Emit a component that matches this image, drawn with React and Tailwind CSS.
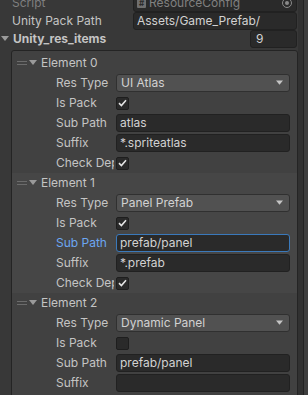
import React from 'react';

const Caret = ({ className = '' }) => (
    <svg width="8" height="6" viewBox="0 0 8 6" className={className}>
        <path d="M0 0 H8 L4 5 Z" fill="currentColor" />
    </svg>
);

const Check = () => (
    <svg width="9" height="8" viewBox="0 0 9 8">
        <path d="M1 4.2 L3.4 6.5 L8 1.2" stroke="#e4e4e4" strokeWidth="1.6" fill="none" />
    </svg>
);

const TextField = ({ value, focused }) => (
    <div
        className={`flex-1 h-[18px] rounded-[3px] bg-[#2a2a2a] border flex items-center pl-[3px] text-[#d2d2d2] whitespace-nowrap ${
            focused ? 'border-[#3a79bb]' : 'border-[#212121]'
        }`}
    >
        {value}
    </div>
);

const Popup = ({ value }) => (
    <div className="flex-1 h-[18px] rounded-[3px] bg-[#515151] border border-[#303030] flex items-center justify-between pl-[4px] pr-[6px] text-[#d2d2d2]">
        <span>{value}</span>
        <Caret className="text-[#c4c4c4] w-[7px]" />
    </div>
);

const Toggle = ({ on }) => (
    <div className="w-[13px] h-[13px] rounded-[2px] bg-[#2a2a2a] border border-[#1e1e1e] flex items-center justify-center">
        {on && <Check />}
    </div>
);

const Field = ({ label, focused, children }) => (
    <div className="h-[20px] flex items-center pl-[44px] pr-[7px]">
        <div className={`w-[60px] shrink-0 ${focused ? 'text-[#6ca6f2]' : 'text-[#c4c4c4]'}`}>
            <div className="max-w-[58px] overflow-hidden whitespace-nowrap">{label}</div>
        </div>
        {children}
    </div>
);

const Element = ({ index, resType, isPack, subPath, suffix, checkDep, selected, focusSub }) => (
    <div className={selected ? 'bg-[#464646]' : ''}>
        <div className="h-[20px] flex items-center pl-[5px] text-[#c4c4c4]">
            <div className="w-[10px] flex flex-col gap-[2px] mr-[2px]">
                <div className="h-px bg-[#6b6b6b]" />
                <div className="h-px bg-[#6b6b6b]" />
            </div>
            <Caret className="text-[#9a9a9a] mr-[4px]" />
            <span>Element {index}</span>
        </div>
        <Field label="Res Type">
            <Popup value={resType} />
        </Field>
        <Field label="Is Pack">
            <Toggle on={isPack} />
        </Field>
        <Field label="Sub Path" focused={focusSub}>
            <TextField value={subPath} focused={focusSub} />
        </Field>
        <Field label="Suffix">
            <TextField value={suffix} />
        </Field>
        <Field label="Check Dep">
            <Toggle on={checkDep} />
        </Field>
    </div>
);

export default function App() {
    return (
        <div className="w-[308px] h-[395px] overflow-hidden bg-[#383838] flex font-['Inter',sans-serif] text-[12px] leading-[16px]">
            <div className="w-[298px] shrink-0 flex flex-col -mt-[6px]">
                {/* Script */}
                <div className="h-[20px] flex items-center pl-[12px] pr-[1px]">
                    <div className="w-[121px] text-[#7f7f7f]">Script</div>
                    <div className="flex-1 h-[18px] rounded-[3px] bg-[#2a2a2a] border border-[#212121] flex items-center pl-[3px] pr-[4px] text-[#808080]">
                        <div className="w-[9px] h-[10px] bg-[#6f6f6f] rounded-[1px] text-[8px] leading-[10px] text-[#2a2a2a] flex items-center justify-center mr-[3px] font-bold">
                            #
                        </div>
                        <span className="flex-1">ResourceConfig</span>
                        <div className="w-[10px] h-[10px] rounded-full border border-[#8a8a8a] flex items-center justify-center">
                            <div className="w-[4px] h-[4px] rounded-full bg-[#8a8a8a]" />
                        </div>
                    </div>
                </div>
                {/* Unity Pack Path */}
                <div className="h-[20px] flex items-center pl-[12px] pr-[1px]">
                    <div className="w-[121px] text-[#c4c4c4]">Unity Pack Path</div>
                    <TextField value="Assets/Game_Prefab/" />
                </div>
                {/* Unity_res_items */}
                <div className="h-[20px] flex items-center pl-[1px] pr-[1px]">
                    <Caret className="text-[#9a9a9a] mr-[4px]" />
                    <div className="flex-1 font-bold text-[#c4c4c4]">Unity_res_items</div>
                    <div className="w-[47px] h-[18px] rounded-[3px] bg-[#2a2a2a] border border-[#212121] flex items-center pl-[5px] text-[#d2d2d2]">
                        9
                    </div>
                </div>
                {/* List */}
                <div className="ml-[11px] mt-[2px] flex-1 border border-[#242424] rounded-[3px] bg-[#414141] pt-[2px]">
                    <Element index={0} resType="UI Atlas" isPack subPath="atlas" suffix="*.spriteatlas" checkDep />
                    <Element index={1} resType="Panel Prefab" isPack subPath="prefab/panel" suffix="*.prefab" checkDep selected focusSub />
                    <Element index={2} resType="Dynamic Panel" isPack={false} subPath="prefab/panel" suffix="" checkDep={false} />
                </div>
            </div>
            <div className="flex-1 flex">
                <div className="w-[5px] bg-[#313131]" />
                <div className="w-px bg-[#232323]" />
                <div className="flex-1 bg-[#3e3e3e]" />
            </div>
        </div>
    );
}
